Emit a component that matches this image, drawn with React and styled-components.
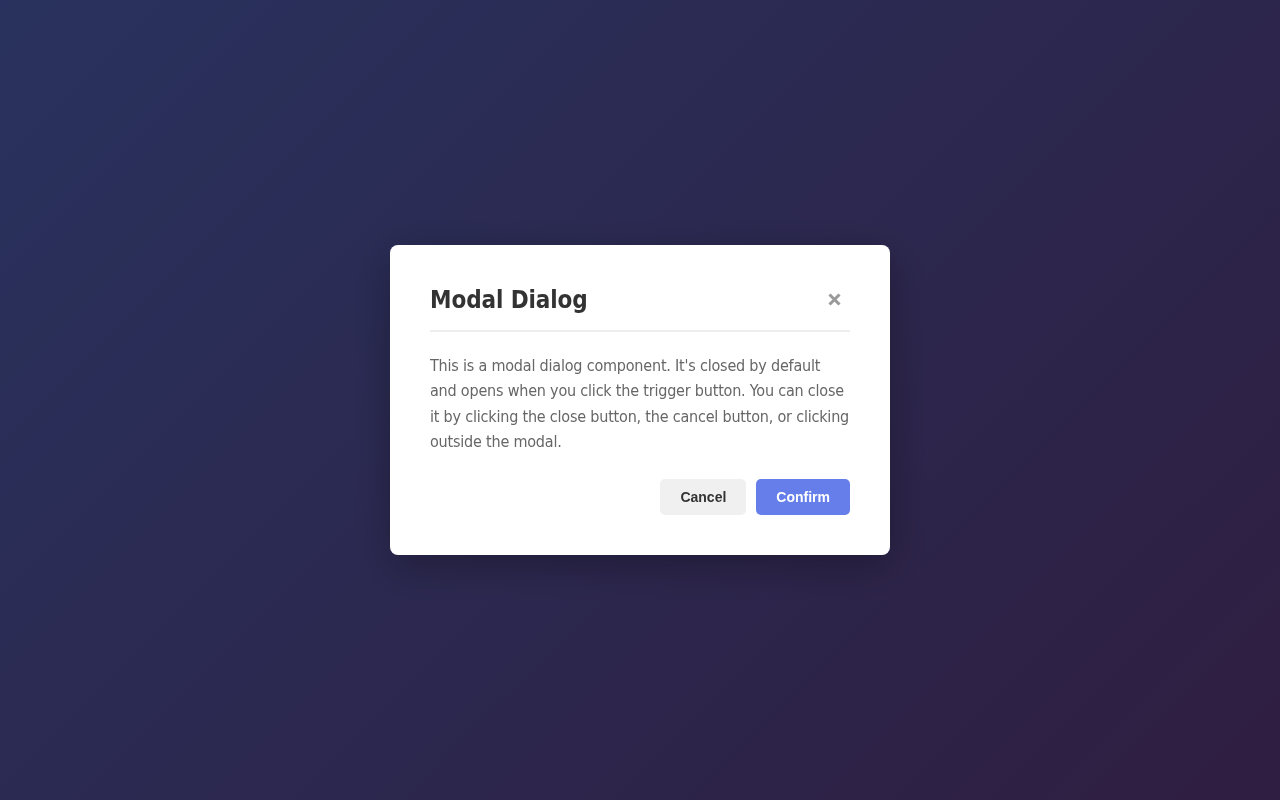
import React from "react";
import styled, { createGlobalStyle } from "styled-components";

const GlobalStyle = createGlobalStyle`
    * {
        box-sizing: border-box;
    }
    html, body {
        margin: 0;
        padding: 0;
    }
    body {
        font-family: Tahoma, "DejaVu Sans Condensed", "DejaVu Sans", sans-serif;
        background: linear-gradient(135deg, #667eea 0%, #764ba2 100%);
        min-height: 100vh;
    }
`;

const Overlay = styled.div`
    position: fixed;
    inset: 0;
    background: rgba(0, 0, 0, 0.6);
    display: flex;
    align-items: center;
    justify-content: center;
`;

const Modal = styled.div`
    width: 500px;
    background: #fff;
    border-radius: 8px;
    padding: 40px;
    box-shadow: 0 10px 40px rgba(0, 0, 0, 0.3);
`;

const Header = styled.div`
    display: flex;
    justify-content: space-between;
    align-items: center;
    padding-bottom: 15px;
    border-bottom: 2px solid #eee;
    margin-bottom: 21px;
`;

const Title = styled.h2`
    margin: 0;
    padding-top: 1px;
    font-size: 24px;
    font-weight: 700;
    color: #333;
    line-height: 1.2;
    letter-spacing: -0.1px;
`;

const CloseButton = styled.button`
    background: none;
    border: none;
    padding: 0 9px 0 0;
    color: #999;
    line-height: 1;
    cursor: pointer;
    display: flex;
    align-items: center;
`;

const Body = styled.p`
    margin: 0 0 24px;
    font-size: 16px;
    line-height: 1.6;
    color: #666;
    letter-spacing: -0.2px;
    white-space: nowrap;
`;

const Footer = styled.div`
    display: flex;
    justify-content: flex-end;
    gap: 10px;
`;

const Button = styled.button`
    font-family: "Liberation Sans", Arial, sans-serif;
    font-size: 14px;
    font-weight: 700;
    padding: 10px 20px;
    border: none;
    border-radius: 5px;
    cursor: pointer;
    background: ${(p) => (p.$primary ? "#667eea" : "#f0f0f0")};
    color: ${(p) => (p.$primary ? "#fff" : "#333")};
`;

export default function App() {
    return (
        <>
            <GlobalStyle />
            <Overlay>
                <Modal>
                    <Header>
                        <Title>Modal Dialog</Title>
                        <CloseButton aria-label="Close">
                            <svg width="13" height="13" viewBox="0 0 13 13">
                                <path
                                    d="M1.5 1.5 L11.5 11.5 M11.5 1.5 L1.5 11.5"
                                    stroke="#999"
                                    strokeWidth="3"
                                />
                            </svg>
                        </CloseButton>
                    </Header>
                    <Body>
                        This is a modal dialog component. It's closed by default
                        <br />
                        and opens when you click the trigger button. You can close
                        <br />
                        it by clicking the close button, the cancel button, or clicking
                        <br />
                        outside the modal.
                    </Body>
                    <Footer>
                        <Button>Cancel</Button>
                        <Button $primary>Confirm</Button>
                    </Footer>
                </Modal>
            </Overlay>
        </>
    );
}
